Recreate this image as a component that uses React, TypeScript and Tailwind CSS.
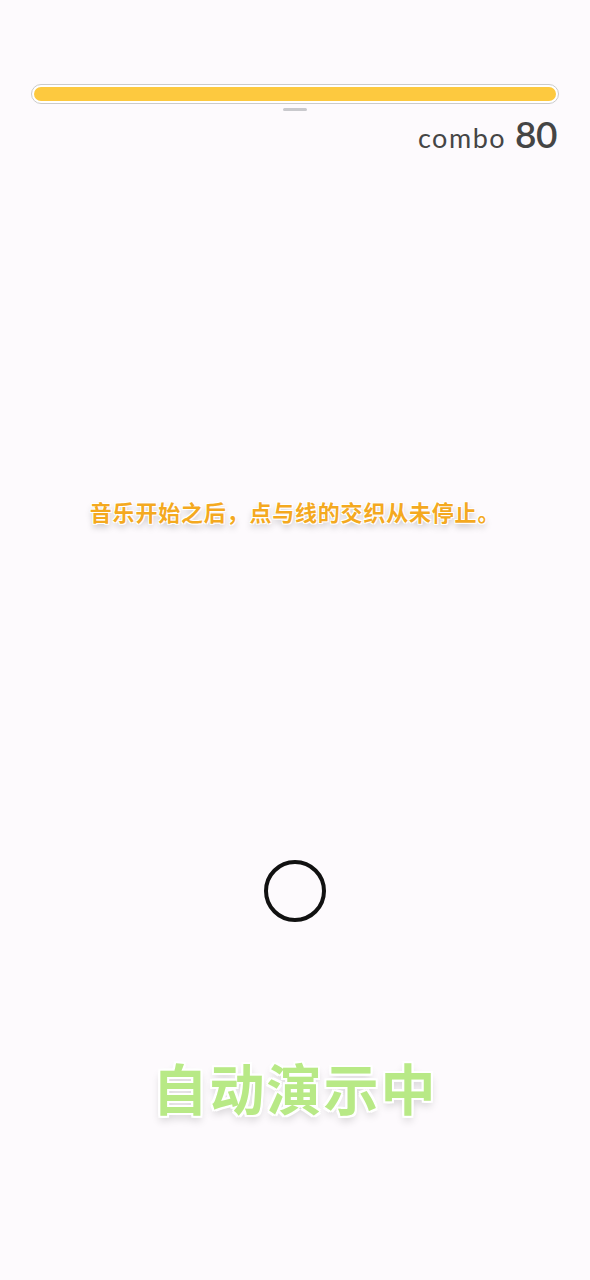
export default function App() {
  return (
    <div
      className="w-[590px] h-[1280px] bg-[#fdfafd] flex flex-col items-center overflow-hidden"
      style={{ fontFamily: '"Noto Sans", "Noto Sans CJK SC", sans-serif' }}
    >
      {/* progress bar */}
      <div className="w-full px-[31px] pt-[84px]">
        <div className="h-[20px] rounded-full border border-[#cbcbcb] bg-white p-[2px]">
          <div className="h-full w-full rounded-full bg-[#fdc93f]" />
        </div>
      </div>
      <div className="mt-[4px] h-[3px] w-[24px] rounded-full bg-[#c9c9cd]" />

      {/* combo */}
      <div className="w-full pr-[33px] flex justify-end items-baseline gap-[9px] mt-[4px] text-[#454545] leading-none">
        <span className="text-[27px] tracking-[1.5px]" style={{ fontFamily: '"Lato", sans-serif' }}>
          combo
        </span>
        <span className="text-[37px] font-semibold tracking-[-0.5px]" style={{ fontFamily: '"Lato", sans-serif' }}>
          80
        </span>
      </div>

      {/* lyric */}
      <div
        className="mt-[348px] text-[22px] font-bold text-[#f4a91f] leading-none tracking-[0.8px]"
        style={{
          fontFamily: '"Noto Sans CJK SC", sans-serif',
          textShadow:
            '1px 1px 0 #fff, -1px -1px 0 #fff, 1px -1px 0 #fff, -1px 1px 0 #fff, 0 4px 6px rgba(0,0,0,0.25)',
        }}
      >
        音乐开始之后，点与线的交织从未停止。
      </div>

      {/* tap circle */}
      <div className="mt-[338px] w-[62px] h-[62px] rounded-full border-[4px] border-[#111]" />

      {/* auto play */}
      <div
        className="mt-[137px] text-[55px] font-bold text-[#b8e986] leading-none tracking-[2px]"
        style={{
          fontFamily: '"Noto Sans CJK SC", sans-serif',
          textShadow:
            '2px 2px 0 #fff, -2px -2px 0 #fff, 2px -2px 0 #fff, -2px 2px 0 #fff, 0 2px 0 #fff, 0 -2px 0 #fff, 2px 0 0 #fff, -2px 0 0 #fff, 0 5px 8px rgba(0,0,0,0.18)',
        }}
      >
        自动演示中
      </div>
    </div>
  );
}
